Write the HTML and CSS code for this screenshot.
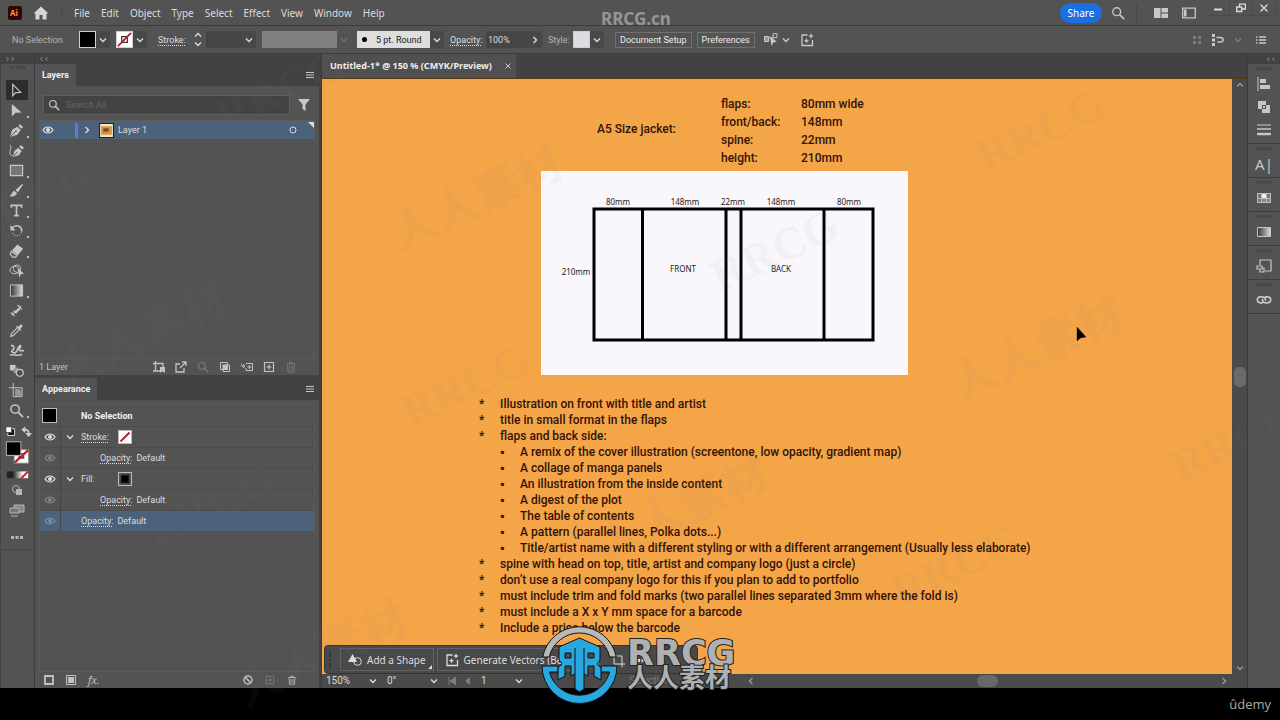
FILE: index.html
```html
<!DOCTYPE html>
<html lang="en">
<head>
<meta charset="utf-8">
<title>Untitled-1* @ 150 % (CMYK/Preview)</title>
<link rel="stylesheet" href="styles.css">
</head>
<body>
<svg class="sprite" aria-hidden="true">
  <symbol id="down" viewBox="0 0 8 8"><path d="M1 2.5 4 5.5 7 2.5" fill="none" stroke="currentColor" stroke-width="1.4"/></symbol>
  <symbol id="right" viewBox="0 0 8 8"><path d="M2.5 1 5.5 4 2.5 7" fill="none" stroke="currentColor" stroke-width="1.4"/></symbol>
  <symbol id="left" viewBox="0 0 8 8"><path d="M5.5 1 2.5 4 5.5 7" fill="none" stroke="currentColor" stroke-width="1.4"/></symbol>
  <symbol id="up" viewBox="0 0 8 8"><path d="M1 5.5 4 2.5 7 5.5" fill="none" stroke="currentColor" stroke-width="1.4"/></symbol>
  <symbol id="burger" viewBox="0 0 10 10"><path d="M1 2.5h8M1 5h8M1 7.500h8" stroke="currentColor"/></symbol>
  <symbol id="search" viewBox="0 0 16 16"><circle cx="6.500" cy="6.500" r="4.500" fill="none" stroke="currentColor" stroke-width="1.600"/><path d="m10 10 5 5" stroke="currentColor" stroke-width="2"/></symbol>
  <symbol id="none" viewBox="0 0 16 16"><path fill="#fff" d="M0 0h16v16H0z"/><path d="M2 14 14 2" stroke="#b3202e" stroke-width="2.500"/></symbol>
  <symbol id="nostroke" viewBox="0 0 16 16"><path fill="#fff" d="M0 0h16v16H0z"/><path d="M5 5h6v6H5z" fill="none" stroke="#333" stroke-width="1.300"/><path d="M1 15 15 1" stroke="#b3202e" stroke-width="2"/></symbol>
  <symbol id="eye" viewBox="0 0 12 10"><path d="M1 5C3.500 1 8.500 1 11 5 8.500 9 3.500 9 1 5Z" fill="none" stroke="currentColor" stroke-width="1.200"/><circle cx="6" cy="5" r="2" fill="currentColor"/></symbol>
  <symbol id="trash" viewBox="0 0 12 12"><path d="M1.500 3h9M4.500 3V1.500h3V3M2.500 3.500l.5 7.500h6l.5-7.500M4.800 5v4.500M7.200 5v4.500" fill="none" stroke="currentColor"/></symbol>
  <symbol id="plusbox" viewBox="0 0 12 12"><path d="M1.500 1.500h9v9h-9zM6 3.500v5M3.500 6h5" fill="none" stroke="currentColor" stroke-width="1.200"/></symbol>
  <symbol id="generate" viewBox="0 0 14 14"><path d="M7.500 2H2v10.500h10.500V7" fill="none" stroke="currentColor" stroke-width="1.300"/><path d="m11 0 .8 2.200 2.200.8-2.200.8L11 6l-.8-2.200L8 3l2.200-.8ZM6.500 5l.8 1.900 1.900.8-1.900.8-.8 1.900-.8-1.900-1.900-.8 1.900-.8Z" fill="currentColor"/></symbol>
</svg>

<header class="menubar">
  <svg class="ai" viewBox="0 0 14 14" role="img" aria-label="Illustrator"><rect width="14" height="14" rx="2.500" fill="#330500"/><text x="2" y="10">Ai</text></svg>
  <svg class="home" viewBox="0 0 16 14" role="img" aria-label="Home"><path d="M8 .5.500 7.500h2V13.500h4V9h3v4.500h4V7.500h2Z" fill="#d6d6d6"/></svg>
  <nav class="menus">
    <button>File</button><button>Edit</button><button>Object</button><button>Type</button><button>Select</button><button>Effect</button><button>View</button><button>Window</button><button>Help</button>
  </nav>
  <button class="share">Share</button>
  <button class="icon find" aria-label="Search"><svg class="i14"><use href="#search"/></svg></button>
  <button class="icon arrange" aria-label="Arrange documents"><svg class="i14" viewBox="0 0 14 14"><path d="M0 2h6.500v10H0zM7.500 2H14v4.500H7.500zM7.500 7.500H14V12H7.500z" fill="currentColor"/></svg></button>
  <button class="icon" aria-label="Switch workspace"><svg class="i14" viewBox="0 0 14 14"><path d="M.7 2.200h12.600v9.600H.7z" fill="none" stroke="currentColor" stroke-width="1.300"/><path d="M2 3.500h2.500v7H2z" fill="currentColor"/></svg></button>
  <div class="window-buttons">
    <button aria-label="Minimize"><svg class="i10" viewBox="0 0 10 10"><path d="M1 6.500h8" stroke="currentColor" stroke-width="2"/></svg></button>
    <button aria-label="Restore"><svg class="i10" viewBox="0 0 10 10"><path d="M.7 4h5v4.500h-5zM3.500 4V1.200h5.800V6H5.700" fill="none" stroke="currentColor" stroke-width="1.300"/></svg></button>
    <button aria-label="Close"><svg class="i10" viewBox="0 0 10 10"><path d="m1.500 1.500 7 7m0-7-7 7" stroke="currentColor" stroke-width="1.300"/></svg></button>
  </div>
</header>

<div class="controlbar">
  <span class="dim status">No Selection</span>
  <div class="combo"><span class="swatch black"></span><button class="drop" aria-label="Fill"><svg class="i8"><use href="#down"/></svg></button></div>
  <div class="combo"><span class="swatch nofill"><svg><use href="#nostroke"/></svg></span><button class="drop" aria-label="Stroke color"><svg class="i8"><use href="#down"/></svg></button></div>
  <label class="dotted" for="weight">Stroke:</label>
  <div class="combo"><span class="stepper"><svg class="i8"><use href="#up"/></svg><svg class="i8"><use href="#down"/></svg></span><input id="weight" class="field weight" type="text"><button class="drop" aria-label="Stroke weights"><svg class="i8"><use href="#down"/></svg></button></div>
  <div class="combo profile"><span class="profile-box"></span><button class="drop off" aria-label="Width profile"><svg class="i8"><use href="#down"/></svg></button></div>
  <div class="combo brush"><span class="brush-box"><i></i>5 pt. Round</span><button class="drop" aria-label="Brush"><svg class="i8"><use href="#down"/></svg></button></div>
  <label class="dotted opacity" for="opacity">Opacity:</label>
  <div class="combo"><input id="opacity" class="field percent" type="text" value="100%"><button class="drop" aria-label="Opacity slider"><svg class="i8"><use href="#right"/></svg></button></div>
  <span class="dim style-label">Style:</span>
  <div class="combo"><span class="swatch pale"></span><button class="drop" aria-label="Graphic style"><svg class="i8"><use href="#down"/></svg></button></div>
  <div class="doc-buttons"><button class="outlined">Document Setup</button><button class="outlined">Preferences</button></div>
  <button class="icon select-similar" aria-label="Select similar"><svg class="i14" viewBox="0 0 14 14"><path d="M.5 3.500h4v5h-4zM9 .7h4v4H9zM4.500 5H9" fill="none" stroke="currentColor"/><path d="M.5 3.500h4v5h-4z" fill="currentColor" opacity=".6"/><path d="m6 3 7 6-3.500.3L7.500 13Z" fill="currentColor"/></svg><svg class="i8"><use href="#down"/></svg></button>
  <button class="icon" aria-label="Generate"><svg class="i14"><use href="#generate"/></svg></button>
  <div class="control-end">
    <svg class="i10 faint" viewBox="0 0 10 10"><path d="M1 1h3v3H1zM6 1h3v3H6zM1 6h3v3H1zM6 6h3v3H6z" fill="currentColor"/></svg>
    <svg class="i14" viewBox="0 0 14 14"><path d="M1 1h3v3H1zM1 5.500h3v3H1zM1 10h3v3H1z" fill="currentColor"/><path d="M5.500 4.500h4.300a2.200 2.200 0 0 1 0 4.500H6.500" fill="none" stroke="currentColor" stroke-width="1.500"/></svg>
    <svg class="i8 faint"><use href="#down"/></svg>
    <svg class="i10 more" viewBox="0 0 10 10"><path d="M0 2h1.500M0 5h1.500M0 8h1.500M3 2h7M3 5h7M3 8h7" stroke="currentColor" stroke-width="1.300"/></svg>
  </div>
</div>

<main class="workspace">
  <aside class="tools">
    <div class="strip"><svg class="i8"><use href="#right"/></svg><svg class="i8"><use href="#right"/></svg></div>
    <div class="grip"></div>
    <div class="tool-list">
      <button class="tool active" aria-label="Selection"><svg viewBox="0 0 16 16"><path d="M4 1.500v12l3.200-3.200 5.300-.3Z" fill="none" stroke="currentColor" stroke-width="1.300"/></svg></button>
      <button class="tool sub" aria-label="Direct selection"><svg viewBox="0 0 16 16"><path d="M3 1v13.500l4-4 6.500-.5Z" fill="currentColor"/></svg></button>
      <button class="tool sub" aria-label="Pen"><svg viewBox="0 0 16 16"><path d="M1 15 3.500 7 9 4l3.500 3.500L9 12.500Z" fill="currentColor"/><path d="m10 3 1.800-2L15 4.500 13 6.200Z" fill="currentColor"/><path d="M1.500 14.500 7 9" stroke="#535353"/><circle cx="7.300" cy="8.700" r="1" fill="#535353"/></svg></button>
      <button class="tool" aria-label="Curvature"><svg viewBox="0 0 16 16"><path d="M4 15 6 8l4-3 3.500 3.500-3 4.500Z" fill="currentColor"/><path d="m11 4 1.500-2L16 5l-2 2Z" fill="currentColor"/><path d="M1 2c3 3-1 6 0 9s3 2 3 3" fill="none" stroke="currentColor"/><path d="m5 14 4-4.500" stroke="#535353"/></svg></button>
      <button class="tool sub" aria-label="Rectangle"><svg viewBox="0 0 16 16"><path d="M1.500 2.500h13v11h-13z" fill="#777" stroke="currentColor" stroke-width="1.300"/></svg></button>
      <button class="tool sub" aria-label="Paintbrush"><svg viewBox="0 0 16 16"><path d="M15 1.500 9.500 10 7 7.500 14 1ZM6 8.500 8.500 11c-.5 3-4.500 4-8 3 3-1.500 2-5 5.500-5.500Z" fill="currentColor"/></svg></button>
      <button class="tool sub" aria-label="Type"><svg viewBox="0 0 16 16"><path d="M2.500 5V2.500h11V5M8 2.500v11M5.500 13.500h5" fill="none" stroke="currentColor" stroke-width="1.800"/></svg></button>
      <button class="tool sub" aria-label="Rotate"><svg viewBox="0 0 16 16"><path d="M3 5.500C7 1 14 3 13.500 9" fill="none" stroke="currentColor" stroke-width="1.700"/><path d="M13.500 9c-.5 5.500-8 6-10 1.500" fill="none" stroke="currentColor" stroke-dasharray="1.500 1.500"/><path d="M1.500 2v6H7Z" fill="currentColor"/></svg></button>
      <button class="tool sub" aria-label="Eraser"><svg viewBox="0 0 16 16"><path d="m9 1.500 6 4.500-5.500 7L3 8Z" fill="currentColor"/><path d="m2.500 9 6 4.500-1.500 1.500H4L1.200 12Z" fill="none" stroke="currentColor" stroke-width="1.200"/></svg></button>
      <button class="tool" aria-label="Shape builder"><svg viewBox="0 0 16 16"><ellipse cx="6" cy="7.500" rx="5" ry="4" fill="none" stroke="currentColor"/><circle cx="8.500" cy="6" r="4" fill="none" stroke="currentColor"/><path d="m9 5 7 6.500-3.300.4L11 15.500Z" fill="currentColor"/></svg></button>
      <button class="tool sub" aria-label="Gradient"><svg viewBox="0 0 16 16"><defs><linearGradient id="fade"><stop stop-color="#333"/><stop offset="1" stop-color="#ddd"/></linearGradient></defs><path d="M1.500 2h13v12h-13z" fill="url(#fade)" stroke="currentColor"/></svg></button>
      <button class="tool" aria-label="Width"><svg viewBox="0 0 16 16"><path d="m3 13 10-10M2 10l4 4M9 2l5 5M5 8l3 3" stroke="currentColor" stroke-width="1.300"/><path d="m6 10 5-5 1 2-4 4Z" fill="currentColor"/></svg></button>
      <button class="tool" aria-label="Eyedropper"><svg viewBox="0 0 16 16"><path d="M9 5 2.500 11.500 1.800 14.200l2.700-.7L11 7" fill="none" stroke="currentColor" stroke-width="1.200"/><path d="m7.500 4 4.500 4.500 1-1-1-1.200 2.700-3.300-1.700-1.700L9.700 4l-1.200-1Z" fill="currentColor"/></svg></button>
      <button class="tool" aria-label="Puppet warp"><svg viewBox="0 0 16 16"><path d="M2 3c3-1 4 2 2.500 4S2 8.500 4 10s4 0 5-3 3-5 3.500-4-3 4-1 5 4-1 4 1M1 13c3-2 8 2 13-1" fill="none" stroke="currentColor" stroke-width="1.700"/></svg></button>
      <button class="tool" aria-label="Blend"><svg viewBox="0 0 16 16"><path d="M1 2h6v6H1z" fill="currentColor"/><path d="M5 6.500 9 4.500l2 3-3 4-3-1Z" fill="#999"/><circle cx="11.500" cy="10.500" r="3.700" fill="#535353" stroke="currentColor" stroke-width="1.300"/></svg></button>
      <button class="tool" aria-label="Artboard"><svg viewBox="0 0 16 16"><path d="M4.500 0v14.500H14V5H0" fill="none" stroke="currentColor"/><path d="M6.500 6.500H11l2.500 2.500V13.500h-7z" fill="#999"/></svg></button>
      <button class="tool sub" aria-label="Zoom"><svg><use href="#search"/></svg></button>
    </div>
    <svg class="colors" viewBox="0 0 34 58" role="img" aria-label="Fill and stroke">
      <path d="M7 5h7v7H7z" fill="#111" stroke="#ddd"/><path d="M5 3h6v6H5z" fill="#fff" stroke="#444"/>
      <path d="M23 6h2c3 0 3.500 2 3.500 4" fill="none" stroke="#ccc" stroke-width="1.700"/><path d="M21 6l4-3.500v7ZM25 9.500h7l-3.500 4Z" fill="#ccc"/>
      <path d="M13.500 26.500h15v14h-15z" fill="#fff" stroke="#888"/><path d="M18 30h6v6h-6z" fill="#535353"/><path d="m14 40 14-13" stroke="#c3202e" stroke-width="2.500"/>
      <path d="M5.500 18.500h15v14h-15z" stroke="#bbb"/>
      <path d="M6 49h7v7H6z" fill="#222"/><path d="M13 49h8v7h-8z" fill="url(#fade)"/><path d="M21 49h7v7h-7z" fill="#fff"/><path d="m21 56 7-7" stroke="#c3202e" stroke-width="2"/>
    </svg>
    <div class="modes">
      <svg class="i12" viewBox="0 0 12 12"><circle cx="5" cy="5" r="3.500" fill="none" stroke="currentColor"/><path d="M5 5h6v6H5z" fill="currentColor"/></svg>
      <svg class="i16" viewBox="0 0 16 14"><path d="M5 2h10v7H5z" fill="#888" stroke="currentColor"/><path d="M1 5h9v5H1zM2 13h7" fill="#777" stroke="currentColor"/></svg>
      <svg class="i14 dots" viewBox="0 0 14 14"><path d="M1 6h3v3H1zM5.500 6h3v3h-3zM10 6h3v3h-3z" fill="currentColor"/></svg>
    </div>
  </aside>

  <aside class="panels">
    <div class="strip"><svg class="i8"><use href="#left"/></svg><svg class="i8"><use href="#left"/></svg></div>
    <section class="panel layers">
      <div class="tabs"><h2>Layers</h2><button class="icon" aria-label="Layers menu"><svg class="i10"><use href="#burger"/></svg></button></div>
      <div class="search-row">
        <label class="search-box"><svg class="i12"><use href="#search"/></svg><input type="search" placeholder="Search All" aria-label="Search layers"></label>
        <button class="icon" aria-label="Filter"><svg class="i12" viewBox="0 0 12 12"><path d="M0 0h12L7.500 5.500V12L4.500 10V5.500Z" fill="currentColor"/></svg></button>
      </div>
      <div class="list">
        <div class="layer">
          <svg class="eye"><use href="#eye"/></svg><i class="stripe"></i><svg class="i8"><use href="#right"/></svg>
          <svg class="thumb" viewBox="0 0 14 14"><path d="M.5.500h13v13H.5z" fill="#f7e3c8" stroke="#222"/><path d="M2 3h10v8H2z" fill="#d89443"/><path d="M4 5h5v3H4z" fill="#64513b"/></svg>
          <span class="grow">Layer 1</span><svg class="i8 target" viewBox="0 0 8 8"><circle cx="4" cy="4" r="3" fill="none" stroke="currentColor"/></svg><i class="corner"></i>
        </div>
      </div>
      <div class="panel-foot">
        <span class="grow">1 Layer</span>
        <svg class="i12" viewBox="0 0 12 12"><path d="M2.500 0v10H12M0 2.500h10V6M0 10h2" fill="none" stroke="currentColor" stroke-width="1.300"/><path d="M7 6h5v6L9.500 9.500 7 12Z" fill="currentColor"/></svg>
        <svg class="i12" viewBox="0 0 12 12"><path d="M5 3H1v8h8V7M5 7l6-6M7 1h4v4" fill="none" stroke="currentColor" stroke-width="1.300"/></svg>
        <svg class="i12 faint"><use href="#search"/></svg>
        <svg class="i12" viewBox="0 0 12 12"><path d="M1.500 1.500h7v7h-7zM4 4h6.500v6.500H4z" fill="none" stroke="currentColor"/><path d="M4 4h4.500v4.500H4z" fill="currentColor"/></svg>
        <svg class="i12" viewBox="0 0 12 12"><path d="M0 2v3h4M2 3l2 2-2 2M5 2.500h6.500v7H5V7M8.300 4v4M6.300 6h4" fill="none" stroke="currentColor"/></svg>
        <svg class="i12"><use href="#plusbox"/></svg>
        <svg class="i12 faint"><use href="#trash"/></svg>
      </div>
    </section>
    <section class="panel appearance">
      <div class="tabs"><h2>Appearance</h2><button class="icon" aria-label="Appearance menu"><svg class="i10"><use href="#burger"/></svg></button></div>
      <div class="list rows">
        <div class="row title"><span class="chip"></span><b>No Selection</b></div>
        <div class="row"><span class="cell"><svg class="eye"><use href="#eye"/></svg></span><svg class="i8"><use href="#down"/></svg><span class="name"><span class="dotted">Stroke:</span></span><svg class="mini"><use href="#none"/></svg></div>
        <div class="row nested"><span class="cell"><svg class="eye faint"><use href="#eye"/></svg></span><span class="dotted">Opacity:</span><span>Default</span></div>
        <div class="row"><span class="cell"><svg class="eye"><use href="#eye"/></svg></span><svg class="i8"><use href="#down"/></svg><span class="name">Fill:</span><svg class="mini" viewBox="0 0 14 14"><path d="M2.500 2.500h9v9h-9z" stroke="#222"/></svg></div>
        <div class="row nested"><span class="cell"><svg class="eye faint"><use href="#eye"/></svg></span><span class="dotted">Opacity:</span><span>Default</span></div>
        <div class="row chosen"><span class="cell"><svg class="eye faint"><use href="#eye"/></svg></span><span class="dotted">Opacity:</span><span>Default</span></div>
      </div>
      <div class="panel-foot">
        <svg class="i10" viewBox="0 0 10 10"><path d="M1 1h8v8H1z" fill="none" stroke="currentColor" stroke-width="1.800"/></svg>
        <svg class="i10" viewBox="0 0 10 10"><path d="M.5.500h9v9h-9z" fill="none" stroke="currentColor"/><path d="M2 2h6v6H2z" fill="currentColor"/></svg>
        <em class="grow">fx.</em>
        <svg class="i10" viewBox="0 0 10 10"><circle cx="5" cy="5" r="4" fill="none" stroke="currentColor" stroke-width="1.500"/><path d="m2 2 6 6" stroke="currentColor" stroke-width="1.500"/></svg>
        <svg class="i10 faint"><use href="#plusbox"/></svg>
        <svg class="i10"><use href="#trash"/></svg>
      </div>
    </section>
  </aside>

  <section class="document">
    <div class="doc-tabs"><div class="doc-tab">Untitled-1* @ 150 % (CMYK/Preview)<button class="icon" aria-label="Close document"><svg class="i8" viewBox="0 0 8 8"><path d="m1.500 1.500 5 5m0-5-5 5" stroke="currentColor"/></svg></button></div></div>
    <div class="doc-body">
      <div class="canvas">
        <div class="spec"><p>A5 Size jacket:</p>
          <dl><dt>flaps:</dt><dd>80mm wide</dd><dt>front/back:</dt><dd>148mm</dd><dt>spine:</dt><dd>22mm</dd><dt>height:</dt><dd>210mm</dd></dl>
        </div>
        <svg class="diagram" viewBox="0 0 367 204" role="img" aria-label="Jacket template">
          <path d="M53 38h279v131H53zM101.500 38v131M185 38v131M200 38v131M283 38v131" fill="none" stroke="#000" stroke-width="3"/>
          <text x="77" y="34">80mm</text><text x="144" y="34">148mm</text><text x="192" y="34">22mm</text><text x="240" y="34">148mm</text><text x="308" y="34">80mm</text>
          <text x="35" y="104">210mm</text><text x="142" y="101">FRONT</text><text x="240" y="101">BACK</text>
        </svg>
        <ul class="notes">
          <li>Illustration on front with title and artist</li>
          <li>title in small format in the flaps</li>
          <li>flaps and back side:
            <ul>
              <li>A remix of the cover illustration (screentone, low opacity, gradient map)</li>
              <li>A collage of manga panels</li>
              <li>An illustration from the inside content</li>
              <li>A digest of the plot</li>
              <li>The table of contents</li>
              <li>A pattern (parallel lines, Polka dots...)</li>
              <li>Title/artist name with a different styling or with a different arrangement (Usually less elaborate)</li>
            </ul>
          </li>
          <li>spine with head on top, title, artist and company logo (just a circle)</li>
          <li>don’t use a real company logo for this if you plan to add to portfolio</li>
          <li>must include trim and fold marks (two parallel lines separated 3mm where the fold is)</li>
          <li>must include a X x Y mm space for a barcode</li>
          <li>Include a price below the barcode</li>
        </ul>
        <div class="taskbar">
          <i class="handle"></i>
          <button class="task shape"><svg class="i14" viewBox="0 0 14 14"><path d="M4.500 1 9 9H0Z" fill="currentColor"/><circle cx="9.500" cy="8.500" r="3.800" fill="none" stroke="currentColor"/></svg>Add a Shape</button>
          <button class="task vectors"><svg class="i14"><use href="#generate"/></svg>Generate Vectors (Beta)</button>
          <svg class="i14" viewBox="0 0 14 14"><path d="M2 2h10v10H2z" fill="none" stroke="currentColor"/></svg>
          <svg class="i14" viewBox="0 0 14 14"><path d="M3 0v11h11M0 3h11v11" fill="none" stroke="currentColor"/></svg>
          <svg class="i14" viewBox="0 0 14 14"><path d="M1 6h3v3H1zM5.500 6h3v3h-3zM10 6h3v3h-3z" fill="currentColor"/></svg>
        </div>
      </div>
      <div class="vscroll"><svg class="i8"><use href="#up"/></svg><i></i><svg class="i8"><use href="#down"/></svg></div>
    </div>
    <div class="statusbar">
      <button class="stat zoom">150%<svg class="i8"><use href="#down"/></svg></button>
      <button class="stat zoom">0°<svg class="i8"><use href="#down"/></svg></button>
      <span class="pager faint"><svg class="i8" viewBox="0 0 8 8"><path d="M1 0v8M8 0v8L2 4Z" fill="currentColor" stroke="currentColor"/></svg><svg class="i8" viewBox="0 0 8 8"><path d="M6 0v8L1 4Z" fill="currentColor"/></svg></span>
      <button class="stat page">1<svg class="i8"><use href="#down"/></svg></button>
      <span class="mode faint">Selection</span>
      <svg class="i8"><use href="#left"/></svg><i class="hthumb"></i><svg class="i8"><use href="#right"/></svg>
    </div>
  </section>

  <aside class="dock">
    <div class="strip"><svg class="i8"><use href="#left"/></svg><svg class="i8"><use href="#left"/></svg></div>
    <div class="dock-group"><i class="grip"></i>
      <button aria-label="Align"><svg class="i16" viewBox="0 0 16 16"><path d="M2 1v14" stroke="currentColor"/><path d="M4 3h6v4H4zM4 9h10v4H4z" fill="currentColor"/></svg></button>
      <button aria-label="Pathfinder"><svg class="i16" viewBox="0 0 16 16"><path d="M2 2h8v4H6v4H2zM10 6h4v8H6v-4h4z" fill="currentColor"/><path d="M7 7h2v2H7z" fill="currentColor"/></svg></button>
      <button aria-label="Stroke"><svg class="i16" viewBox="0 0 16 16"><path d="M1 3h14" stroke="currentColor"/><path d="M1 7h14" stroke="currentColor" stroke-width="1.500"/><path d="M1 12h14" stroke="currentColor" stroke-width="2.500"/></svg></button>
    </div>
    <div class="dock-group"><i class="grip"></i><button class="char" aria-label="Character">A|</button></div>
    <div class="dock-group"><i class="grip"></i><button aria-label="Swatches"><svg class="i16" viewBox="0 0 16 16"><path d="M1 3h14v10H1z" fill="#bbb"/><path d="M2 4h3v4H2zM11 4h3v4h-3zM2 9h3v3H2z" fill="#777"/><path d="M6 4h4v4H6z" fill="#eee"/><path d="M6 9h4v3H6zM11 9h3v3h-3z" fill="#888"/></svg></button></div>
    <div class="dock-group"><i class="grip"></i><button aria-label="Gradient panel"><svg class="i16" viewBox="0 0 16 16"><path d="M1.500 3.500h13v9h-13z" fill="url(#fade)" stroke="currentColor"/></svg></button></div>
    <div class="dock-group"><i class="grip"></i><button aria-label="Asset export"><svg class="i16" viewBox="0 0 16 16"><path d="M4 7V2h11v11H9M1 8h5v3H1zM4 11v3h4v-4H6" fill="none" stroke="currentColor" stroke-width="1.200"/></svg></button></div>
    <div class="dock-group"><i class="grip"></i><button aria-label="Links"><svg class="i16" viewBox="0 0 16 16"><path d="M7 10.800H4.300a3 3 0 0 1 0-6h2.200a3 3 0 0 1 2.800 4M9 4.800h2.700a3 3 0 0 1 0 6H9.500a3 3 0 0 1-2.800-4" fill="none" stroke="currentColor" stroke-width="1.700"/></svg></button></div>
  </aside>
</main>

<footer class="letterbox"><span>ûdemy</span></footer>

<div class="overlay" aria-hidden="true">
  <span class="mark" style="left:475px;top:195px">人人素材</span>
  <span class="mark serif" style="left:1040px;top:130px">RRCG</span>
  <span class="mark serif" style="left:775px;top:250px">RRCG</span>
  <span class="mark serif" style="left:280px;top:90px">RRCG</span>
  <span class="mark serif" style="left:465px;top:385px">RRCG</span>
  <span class="mark serif" style="left:30px;top:200px">RRCG</span>
  <span class="mark" style="left:140px;top:330px">人人素材</span>
  <span class="mark serif" style="left:210px;top:505px">RRCG</span>
  <span class="mark" style="left:1035px;top:345px">人人素材</span>
  <span class="mark" style="left:680px;top:505px">人人素材</span>
  <span class="mark serif" style="left:1235px;top:440px">RRCG</span>
  <span class="mark serif" style="left:955px;top:565px">RRCG</span>
  <span class="mark" style="left:320px;top:650px">人人素材</span>
  <span class="site">RRCG.cn</span>
  <svg class="cursor" viewBox="0 0 12 17"><path d="M1 1v14l3.500-3 5.500-1Z" fill="#000" stroke="#3a2a18" stroke-width=".5"/></svg>
  <svg class="brand" viewBox="0 0 200 80">
    <g stroke="#111" stroke-width="1">
      <path d="M1.700 33A37.500 37.500 0 0 1 75.300 33H68.700A31 31 0 0 0 8.300 33Z" fill="#b9b9b9"/>
      <path d="M1 42H17V48H8.500A31 31 0 0 0 68.500 48H60V42H76A37.500 37.500 0 0 1 1 42Z" fill="#29a8e0"/>
      <path d="M38.500 14 59 23V36L56 40 60 44V56L53 52V42H47V52L43 50V65L38.500 68 34 65V50L30 52V42H24V52L17 56V44L21 40 18 36V23Z" fill="#29a8e0"/>
      <path d="M24 29H30V34H24ZM47 29H53V34H47Z" fill="#4a4a4a"/>
      <path d="M34 24V50M43 24V50" fill="none"/>
    </g>
    <text class="latin" x="86" y="41">RRCG</text>
    <text class="han" x="86" y="63">人人素材</text>
  </svg>
</div>
</body>
</html>
```

FILE: styles.css
```css
:root {
  --bg: #535353;
  --dark: #424242;
  --line: #3b3b3b;
  --text: #dcdcdc;
  --select: #4c627b;
  --orange: #f4a548;
  --small: 9px/14px Roboto, "Noto Sans", sans-serif;
}

* { box-sizing: border-box; }

body {
  margin: 0;
  min-height: 100vh;
  display: flex;
  flex-direction: column;
  background: var(--bg);
  color: var(--text);
  font: 10px/14px "Noto Sans", "Open Sans", sans-serif;
  overflow-x: hidden;
}

button {
  margin: 0;
  padding: 0;
  border: 0;
  background: none;
  color: inherit;
  font: inherit;
  white-space: nowrap;
}

input { font: inherit; color: inherit; border: 0; margin: 0; min-width: 0; }
svg { flex: none; display: block; }
i { flex: none; }
h2, p, ul, dl, dd { margin: 0; padding: 0; }
.sprite { position: absolute; width: 0; height: 0; }
.grow { flex: 1; }
.faint { opacity: .35; }
.dim { color: #b4b4b4; }
.i8 { width: 8px; height: 8px; }
.i10 { width: 10px; height: 10px; }
.i12 { width: 12px; height: 12px; }
.i14 { width: 14px; height: 14px; }
.i16 { width: 16px; height: 16px; }
.icon { display: flex; align-items: center; justify-content: center; color: #c8c8c8; }
.dotted { text-decoration: underline dotted 1px; text-underline-offset: 2px; }

/* Menu bar */
.menubar {
  display: flex;
  align-items: center;
  height: 26px;
  padding: 0 4px 0 8px;
  border-bottom: 1px solid var(--line);
}
.ai { width: 14px; height: 14px; }
.ai text { font: bold 8px "Open Sans", sans-serif; fill: #ff9a3c; }
.home { width: 16px; height: 14px; margin-left: 11px; }
.menus { display: flex; gap: 11px; margin-left: 12px; padding-left: 12px; border-left: 1px solid #4a4a4a; flex: 1; }
.share { width: 42px; height: 20px; border-radius: 10px; background: #1b6fe0; color: #fff; }
.find { padding: 0 11px 0 9px; border-right: 1px solid #474747; height: 18px; }
.arrange { margin: 0 14px 0 17px; }
.window-buttons { display: flex; align-self: flex-start; margin-left: 11px; }
.window-buttons button { width: 23px; height: 16px; display: grid; place-items: center; border: 1px solid #4b4b4b; border-top: 0; border-left: 0; }

/* Control bar */
.controlbar {
  display: flex;
  align-items: center;
  height: 28px;
  padding: 0 14px 0 12px;
  border-bottom: 1px solid var(--line);
  font: var(--small);
  white-space: nowrap;
}
.combo { display: flex; align-items: center; height: 17px; margin-right: 6px; }
.status { flex: none; width: 67px; }
.swatch { width: 17px; height: 17px; border: 1px solid #cfcfcf; }
.black { background: #000; }
.pale { background: #dedbe2; }
.nofill svg { width: 15px; height: 15px; }
.drop { width: 14px; height: 17px; display: grid; place-items: center; background: #484848; }
.off { background: none; opacity: .2; }
.stepper { width: 16px; display: grid; justify-items: center; gap: 1px; }
.controlbar > .dotted { flex: none; width: 32px; margin-left: 5px; }
.controlbar > .opacity { width: 36px; margin-left: 0; }
.field { height: 17px; background: #454545; padding: 0 2px; }
.weight { width: 36px; }
.percent { width: 42px; }
.profile-box { width: 75px; height: 17px; background: #818181; }
.brush-box { display: flex; align-items: center; gap: 9px; width: 73px; height: 17px; padding-left: 5px; background: #dedede; color: #222; }
.brush-box i { width: 5px; height: 5px; border-radius: 50%; background: #000; }
.style-label { flex: none; width: 25px; }
.doc-buttons { display: flex; gap: 5px; margin-left: 5px; }
.outlined { height: 16px; padding: 0 4px; border: 1px solid #707070; line-height: 14px; color: #ececec; }
.select-similar { gap: 4px; margin: 0 10px 0 9px; }
.control-end { display: flex; align-items: center; gap: 9px; margin-left: auto; color: #c8c8c8; }
.more { margin-left: 5px; }

/* Workspace */
.workspace { flex: 1; display: flex; min-height: 0; background: var(--line); }
.strip { height: 10px; padding: 1px 4px; display: flex; background: var(--dark); color: #9c9c9c; }
.strip svg { width: 5px; }
.grip { display: block; width: 16px; height: 3px; margin: 2px auto; background: repeating-linear-gradient(90deg, #414141 0 1px, transparent 1px 2px); }

.tools { width: 34px; margin-right: 1px; background: var(--bg); flex: none; border-left: 1px solid #454545; }
.tools > .grip { margin-bottom: 11px; }
.tool-list { display: flex; flex-direction: column; align-items: center; padding-right: 2px; }
.tool { width: 22px; height: 20px; display: grid; place-items: center; color: #c6c6c6; position: relative; }
.tool svg { width: 15px; height: 15px; }
.active { background: #2d2d2d; }
.sub::after { content: ""; position: absolute; right: -1px; bottom: 2px; border: 1px solid #bdbdbd; }
.colors { width: 33px; height: 58px; margin-top: 3px; }
.modes { display: flex; flex-direction: column; align-items: center; gap: 6px; margin-top: 3px; padding: 0 2px 5px 0; border-bottom: 1px solid #474747; color: #b5b5b5; }
.dots { margin-top: 6px; }

.panels { width: 286px; flex: none; display: flex; flex-direction: column; margin-right: 1px; background: var(--dark); font: var(--small); }
.panel { display: flex; flex-direction: column; background: var(--bg); margin-right: 2px; }
.layers { flex: 0 0 311px; margin-bottom: 3px; }
.appearance { flex: 1; }
.tabs { display: flex; justify-content: space-between; align-items: stretch; height: 22px; padding-right: 4px; background: var(--dark); }
.tabs h2 { padding: 0 7px; font-size: 9px; line-height: 22px; background: var(--bg); color: #f0f0f0; }
.search-row { display: flex; align-items: center; gap: 8px; padding: 9px 9px 5px 8px; }
.search-box { flex: 1; display: flex; align-items: center; gap: 6px; height: 20px; padding: 0 4px; background: #434343; border: 1px solid #5e5e5e; color: #c8c8c8; }
.search-box input { flex: 1; background: transparent; padding: 0; }
.search-box input::placeholder { color: #656565; opacity: 1; }
.list { flex: 1; margin: 0 4px; border: 1px solid #5b5b5b; }
.layer { display: flex; align-items: center; height: 18px; background: var(--select); padding-left: 2px; position: relative; }
.eye { width: 12px; height: 10px; }
.stripe { width: 3px; height: 15px; margin: 0 5px 0 21px; background: #587be0; }
.thumb { width: 15px; height: 15px; margin: 0 4px 0 8px; }
.target { margin-right: 17px; }
.corner { position: absolute; right: 0; top: 1px; border: 3px solid; border-color: #ddd #ddd transparent transparent; }
.panel-foot { display: flex; align-items: center; gap: 10px; height: 16px; padding: 0 22px 0 4px; color: #c2c2c2; }
.appearance .panel-foot { gap: 12px; padding-left: 9px; }
.panel-foot em { font: italic 11px/14px "Open Sans", sans-serif; }

.rows { margin-top: 4px; }
.row { display: flex; align-items: center; height: 21px; gap: 7px; border-top: 1px solid #4c4c4c; }
.row.title { gap: 24px; padding-left: 2px; color: #f0f0f0; border-top: 0; }
.chip { width: 15px; height: 15px; background: #000; border: 1px solid #bbb; }
.cell { width: 21px; height: 21px; display: grid; place-items: center; border-right: 1px solid #464646; }
.row > .i8 { margin-left: -2px; }
.name { width: 30px; }
.mini { width: 14px; height: 14px; border: 1px solid #bbb; }
.row > .dotted { margin-left: 13px; }
.nested > .dotted { margin-left: 32px; }
.row > .dotted + span { margin-left: -3px; }
.chosen { background: var(--select); }

/* Document */
.document { flex: 1; min-width: 0; display: flex; flex-direction: column; background: var(--dark); }
.doc-tabs { height: 25px; display: flex; border-bottom: 1px solid #593914; }
.doc-tab { display: flex; align-items: center; gap: 12px; padding: 0 4px 0 8px; background: #505050; color: #eee; font-size: 9px; font-weight: bold; }
.doc-body { flex: 1; display: flex; }
.canvas { flex: 1; display: flex; flex-direction: column; align-items: flex-start; position: relative; background: var(--orange); color: #32130a; font: 500 12px/16px Roboto, "Liberation Sans", sans-serif; padding: 16px 0 0 157px; }
.spec { display: flex; align-items: center; gap: 44px; margin-left: 118px; white-space: nowrap; }
.spec p { width: 80px; margin-bottom: 4px; }
.spec dl { display: grid; grid-template-columns: 80px auto; line-height: 18px; }
.diagram { width: 367px; height: 204px; margin: 4px 0 21px 62px; background: #f9f7fb; }
.diagram text { font: 8px "Noto Sans", sans-serif; text-anchor: middle; fill: #222; }
.notes { list-style: none; white-space: nowrap; }
.notes li { padding-left: 21px; }
.notes li::before { content: "*"; float: left; margin-left: -21px; }
.notes ul { list-style: none; }
.notes ul li { padding-left: 20px; }
.notes ul li::before { content: "▪"; margin-left: -20px; }
.taskbar { position: absolute; left: 2px; bottom: 0; height: 29px; width: 374px; display: flex; align-items: center; gap: 3px; padding: 3px 4px; border: 1px solid #333; border-radius: 4px; background: #494949; color: #ddd; font: 10px/14px "Noto Sans", sans-serif; overflow: hidden; }
.handle { width: 8px; height: 16px; border-left: 2px dotted #333; }
.task { display: flex; align-items: center; gap: 5px; height: 23px; padding: 0 7px; border: 1px solid #626262; }
.taskbar > svg { margin-right: 8px; }
.shape { position: relative; }
.shape::after { content: ""; position: absolute; right: 1px; bottom: 1px; border: 2px solid; border-color: transparent #ddd #ddd transparent; }
.vscroll { width: 15px; display: flex; flex-direction: column; align-items: center; justify-content: space-between; padding: 2px 0; background: #4a4a4a; color: #999; }
.vscroll i { width: 12px; height: 20px; border-radius: 5px; background: #6a6a6a; }
.statusbar { display: flex; align-items: center; height: 14px; padding: 0 19px 0 4px; background: #4a4a4a; font: var(--small); font-size: 10px; overflow: hidden; }
.statusbar > svg { color: #999; }
.stat { display: flex; align-items: center; justify-content: space-between; }
.zoom { width: 51px; margin-right: 10px; }
.page { width: 42px; }
.pager { display: flex; gap: 8px; margin-right: 9px; }
.mode { flex: 1; padding-left: 106px; }
.hthumb { width: 21px; height: 12px; border-radius: 6px; background: #686868; margin: 0 222px; }

/* Dock */
.dock { width: 32px; flex: none; margin-left: 1px; background: var(--bg); }
.dock .strip { justify-content: flex-end; }
.dock-group { padding: 1px 0 2px; border-bottom: 1px solid #3d3d3d; display: grid; justify-items: center; }
.dock-group button { height: 23px; color: #c6c6c6; display: grid; place-items: center; }
.dock-group .char { font-size: 15px; }

.letterbox { height: 32px; background: #000; display: flex; align-items: center; justify-content: flex-end; padding: 0 9px; color: #a9a9a9; font: 13px/18px "Open Sans", sans-serif; }

/* Video overlay */
.overlay { position: absolute; inset: 0; pointer-events: none; overflow: hidden; }
.mark { position: absolute; transform: translate(-50%, -50%) rotate(-25deg); color: #808080; opacity: .05; font: bold 46px "Noto Sans CJK SC", sans-serif; white-space: nowrap; }
.serif { font-family: "Liberation Serif", serif; }
.site { position: absolute; left: 601px; top: 8px; font: bold 17px/22px "Noto Sans", sans-serif; color: #969696; }
.cursor { position: absolute; left: 1076px; top: 326px; width: 12px; height: 17px; }
.brand { position: absolute; left: 541px; top: 624px; width: 200px; height: 80px; }
.brand text { fill: #b0b0b0; stroke: #222; stroke-width: 2px; paint-order: stroke; }
.latin { font: bold 35px "DejaVu Sans", sans-serif; }
.han { font: bold 26px "Noto Sans CJK SC", sans-serif; }
```
